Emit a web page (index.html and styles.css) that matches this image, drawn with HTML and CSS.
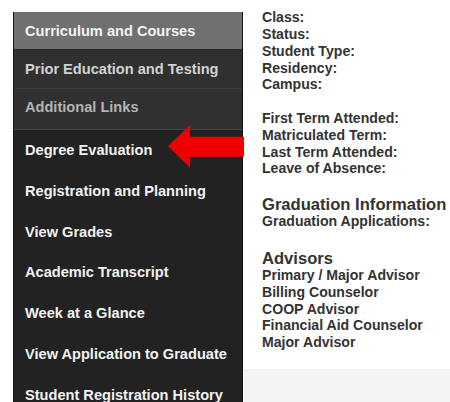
FILE: index.html
```html
<!DOCTYPE html>
<html>
<head>
<meta charset="utf-8">
<link rel="stylesheet" href="styles.css">
</head>
<body>
<div class="page">
  <nav class="sidebar">
    <div class="tab tab-active">Curriculum and Courses</div>
    <div class="tab tab-dim">Prior Education and Testing</div>
    <div class="tab tab-dimmer">Additional Links</div>
    <ul class="links">
      <li>Degree Evaluation</li>
      <li>Registration and Planning</li>
      <li>View Grades</li>
      <li>Academic Transcript</li>
      <li>Week at a Glance</li>
      <li>View Application to Graduate</li>
      <li>Student Registration History</li>
    </ul>
  </nav>
  <main class="main">
    <div class="info">
      <div class="group">
        <div>Class:</div>
        <div>Status:</div>
        <div>Student Type:</div>
        <div>Residency:</div>
        <div>Campus:</div>
      </div>
      <div class="group group-gap">
        <div>First Term Attended:</div>
        <div>Matriculated Term:</div>
        <div>Last Term Attended:</div>
        <div>Leave of Absence:</div>
      </div>
      <h2 class="heading heading-grad">Graduation Information</h2>
      <div class="group">
        <div>Graduation Applications:</div>
      </div>
      <h2 class="heading heading-adv">Advisors</h2>
      <div class="group">
        <div>Primary / Major Advisor</div>
        <div>Billing Counselor</div>
        <div>COOP Advisor</div>
        <div>Financial Aid Counselor</div>
        <div>Major Advisor</div>
      </div>
    </div>
    <div class="panel"></div>
  </main>
  <svg class="arrow" width="80" height="46" viewBox="0 0 80 46">
    <polygon points="0,21 22,0 22,11.7 76,11.7 76,31.7 22,31.7 22,42.7" fill="#ee0000"/>
  </svg>
</div>
</body>
</html>
```
FILE: styles.css
```css
html, body {
  margin: 0;
  padding: 0;
  background: #ffffff;
}
body {
  font-family: "Liberation Sans", Arial, sans-serif;
  width: 450px;
  height: 402px;
  overflow: hidden;
}
.page {
  position: relative;
  display: flex;
  align-items: flex-start;
  height: 402px;
}
.sidebar {
  margin-left: 13px;
  margin-top: 12px;
  width: 228px;
  height: 390px;
  background: #222222;
  border-left: 1px solid #1a1a1a;
  border-right: 1px solid #111111;
  font-size: 14.6px;
  font-weight: bold;
  flex-shrink: 0;
}
.tab {
  box-sizing: border-box;
  height: 38.4px;
  padding-left: 11px;
  display: flex;
  align-items: center;
  border-bottom: 1px solid #3b3b3b;
}
.tab-active {
  background: #707070;
  color: #f4f4f4;
  border-bottom-color: #262626;
}
.tab-dim {
  background: #303030;
  color: #d2d2d2;
}
.tab-dimmer {
  background: #303030;
  color: #b4b4b4;
  height: 40.9px;
  padding-bottom: 2.5px;
  border-bottom-color: #444444;
}
.links {
  list-style: none;
  margin: 0;
  padding: 0;
}
.links li {
  height: 40.8px;
  padding-left: 11px;
  display: flex;
  align-items: center;
  color: #f2f2f2;
}
.main {
  flex: 1;
  display: flex;
  flex-direction: column;
  margin-top: 9.3px;
  padding-left: 1px;
}
.info {
  padding-left: 18px;
  color: #333333;
  font-size: 14.1px;
  font-weight: bold;
  line-height: 16.8px;
}
.group-gap {
  margin-top: 16.8px;
}
.heading {
  margin: 0;
  font-size: 16.6px;
  line-height: 17px;
  font-weight: bold;
  color: #333333;
}
.heading-grad {
  margin-top: 19px;
}
.heading-adv {
  margin-top: 20px;
}
.panel {
  margin-top: 18px;
  height: 40px;
  background: #f3f4f4;
}
.arrow {
  position: absolute;
  left: 168px;
  top: 125px;
}
```
